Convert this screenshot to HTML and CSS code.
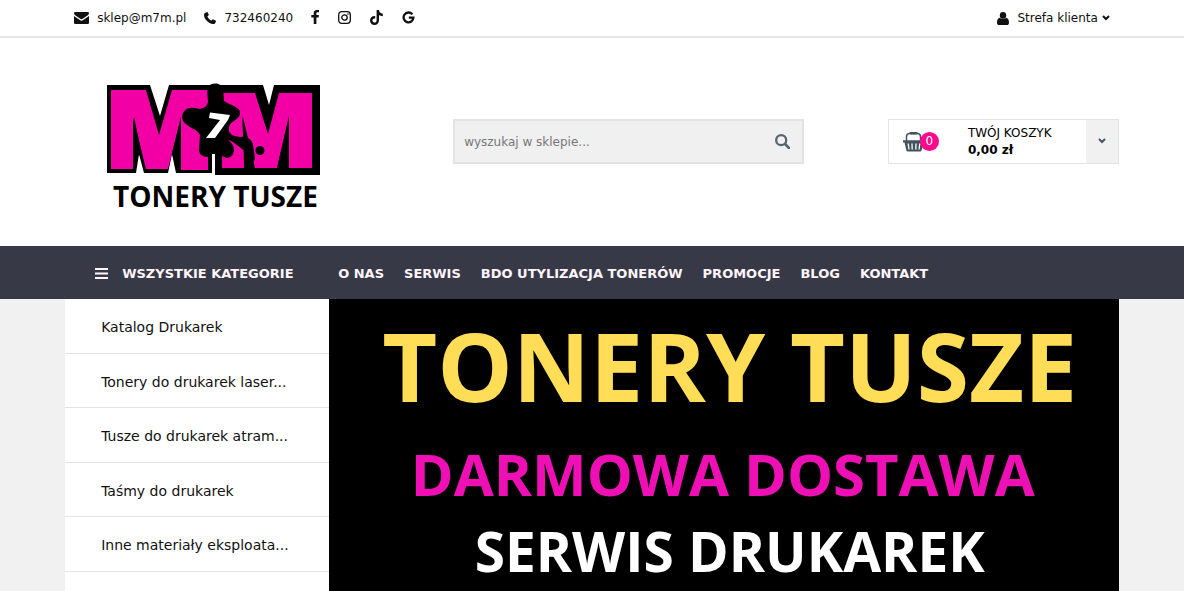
FILE: index.html
```html
<!DOCTYPE html>
<html lang="pl">
<head>
<meta charset="utf-8">
<meta name="viewport" content="width=device-width, initial-scale=1">
<title>M7M Tonery Tusze</title>
<link rel="stylesheet" href="styles.css">
</head>
<body>
<header>
  <div class="topbar">
    <div class="container topbar-row">
      <a class="contact" href="mailto:sklep@m7m.pl">
        <svg class="icon-mail" viewBox="0 0 15 12" aria-hidden="true"><path d="M1.200 0h12.600A1.200 1.200 0 0 1 15 1.300c0 .8-.5 1.500-1.200 2L8.700 6.800q-1.200.8-2.400 0L1.200 3.300C.5 2.800 0 2.100 0 1.300A1.200 1.200 0 0 1 1.200 0z"/><path d="M0 4l5.800 4.100q1.700 1.100 3.400 0L15 4v6.800A1.200 1.200 0 0 1 13.800 12H1.200A1.200 1.200 0 0 1 0 10.800z"/></svg>
        <span>sklep@m7m.pl</span>
      </a>
      <a class="contact" href="tel:732460240">
        <svg class="icon-phone" viewBox="0 0 12 12" aria-hidden="true"><path d="M2.600.2C3.200-.1 3.500 0 3.700.5l1 2c.2.500.1.800-.3 1.100l-.8.700c-.2.300-.2.500 0 .8.900 1.600 1.800 2.500 3.400 3.400.3.200.5.100.7-.1l.8-.9c.3-.3.500-.3.900-.1l2.100 1.100c.4.200.5.400.4.900-.3 1.600-1.300 2.600-2.900 2.600C4.500 12 0 6.500 0 3 0 1.600 1 .6 2.600.2z"/></svg>
        <span>732460240</span>
      </a>
      <nav class="social" aria-label="Social media">
        <a href="#facebook" aria-label="Facebook"><svg class="icon-fb" viewBox="0 0 8 14" aria-hidden="true"><path d="M8 .1v2.200H6.700C5.700 2.300 5.400 2.800 5.400 3.500V5.100h2.500l-.3 2.500H5.400V14H2.700V7.600H.3V5.100h2.400V3.200C2.700 1.100 4 0 6 0c1 0 1.700.1 2 .1z"/></svg></a>
        <a href="#instagram" aria-label="Instagram"><svg class="icon-ig" viewBox="0 0 13 13" aria-hidden="true"><rect x=".7" y=".7" width="11.600" height="11.600" rx="3" fill="none" stroke="currentColor" stroke-width="1.300"/><circle cx="6.500" cy="6.500" r="2.700" fill="none" stroke="currentColor" stroke-width="1.300"/><circle cx="10" cy="3" r=".8"/></svg></a>
        <a href="#tiktok" aria-label="TikTok"><svg class="icon-tt" viewBox="0 0 13 15" aria-hidden="true"><path d="M6.600 0H9c.1 2 1.500 3.500 3.800 3.700v2.500C11.300 6.200 10 5.700 9 5v5.200C9 13.200 7 15 4.500 15 2 15 0 13 0 10.500 0 7.700 2.300 5.800 5.200 6.100v2.600C3.700 8.300 2.500 9.200 2.500 10.500c0 1.200.9 2 2 2 1.300 0 2.100-.9 2.100-2.300z"/></svg></a>
        <a href="#google" aria-label="Google"><svg class="icon-g" viewBox="0 0 13 13" aria-hidden="true"><path d="M10.300 3.300A4.900 4.900 0 1 0 11.400 6.600H6.800" fill="none" stroke="currentColor" stroke-width="2.300"/></svg></a>
      </nav>
      <button class="client" type="button">
        <svg class="icon-user" viewBox="0 0 12 13" aria-hidden="true"><ellipse cx="6" cy="3.400" rx="3.200" ry="3.400"/><path d="M2.600 5.700Q6 8.400 9.400 5.700C11.300 6.400 12 8.200 12 10.700 12 12.200 11.100 13 9.900 13H2.100C.9 13 0 12.200 0 10.700 0 8.200.7 6.400 2.600 5.700z"/></svg>
        <span>Strefa klienta</span>
        <svg class="icon-chev" viewBox="0 0 8 6" aria-hidden="true"><path d="M1 1l3 3 3-3" fill="none" stroke="currentColor" stroke-width="2"/></svg>
      </button>
    </div>
  </div>
  <div class="container masthead">
    <a class="logo" href="#home" aria-label="M7M Tonery Tusze">
      <svg viewBox="0 0 250 150" role="img" aria-label="M7M Tonery Tusze">
        <path d="M18 15H61L71 46 80 15H174L180 35 185 15H231V105H127V95H122V103H87L83 84 79 103H55L50 84 47 103H18z"/>
        <g fill="#f200a5">
          <path d="M22 20H57L70 65 83 20H119V100H92V47L79 99H57L44 47V99H22z"/>
          <path d="M134 23H166L179 64 190 23H223V98H200V46L188 98H165L153 46 156 98H133z"/>
        </g>
        <path d="M118 18C122 12 132 12 134 19L135 31C143 36 152 37 151 44 150 50 141 51 140 57 139 64 143 66 151 67 158 66 163 69 164 75L166 89 162 95 156 81C150 77 144 71 139 70 143 73 145 76 145 80 145 85 141 88 138 88 134 87 131 84 129 81 126 83 124 83 122 85 118 89 110 86 110 80L111 65C109 59 99 58 94 51 91 43 97 36 106 38 112 40 118 38 119 32z"/>
        <path d="M122 84h5v21h-5z" fill="#fff"/>
        <path d="M119 80h4v23h-4zM126 80h6v25h-6z"/>
        <path d="M45 47L56 99 50 84 45 99zM92 47V99H88L83 84zM154 47L166 98H155zM200 47V98H188z"/>
        <circle cx="171" cy="80.500" r="4.500"/>
        <path d="M121 42.500L141 45 139 50 126 68H117L131 50 120 48z" fill="#fff"/>
        <text x="24" y="136.500" class="logo-text">TONERY TUSZE</text>
      </svg>
    </a>
    <form class="search" role="search">
      <input type="search" placeholder="wyszukaj w sklepie..." aria-label="wyszukaj w sklepie">
      <button type="button" aria-label="Szukaj"><svg viewBox="0 0 15 15" aria-hidden="true"><circle cx="6.200" cy="6.200" r="5" fill="none" stroke="currentColor" stroke-width="2.300"/><path d="M10 10l4 4" stroke="currentColor" stroke-width="2.600" stroke-linecap="round"/></svg></button>
    </form>
    <div class="cart">
      <a class="cart-main" href="#cart">
        <span class="basket">
          <svg viewBox="0 0 22 20" aria-hidden="true"><path d="M3.500 9V4.500Q3.700 1.600 6.500 1.600H14.500Q17.300 1.600 17.500 4.500V9" fill="none" stroke="currentColor" stroke-width="1.500"/><rect x="6.500" y="0" width="8" height="2.500" rx="1"/><path d="M0 8.300h22v2.200h-1.500L18.500 18.500Q18.300 19.600 17.200 19.600H4.700Q3.600 19.600 3.400 18.500L1.500 10.500H0z"/><path d="M5.200 11.500l.8 6M9 11.500l.2 6M13 11.500l-.2 6M16.800 11.500l-.8 6" stroke="#fff" stroke-width="1.300"/></svg>
          <span class="badge">0</span>
        </span>
        <span class="cart-text"><span>TWÓJ KOSZYK</span><strong>0,00 zł</strong></span>
      </a>
      <button class="cart-toggle" type="button" aria-label="Pokaż koszyk"><svg class="icon-chev" viewBox="0 0 8 6" aria-hidden="true"><path d="M1 1l3 3 3-3" fill="none" stroke="currentColor" stroke-width="2"/></svg></button>
    </div>
  </div>
  <div class="navbar">
    <nav class="container nav-row" aria-label="Menu">
      <a class="all" href="#all"><svg viewBox="0 0 13 11" aria-hidden="true"><path d="M0 1h13M0 5.500h13M0 10h13" stroke="currentColor" stroke-width="2"/></svg>WSZYSTKIE KATEGORIE</a>
      <a href="#o-nas">O NAS</a>
      <a href="#serwis">SERWIS</a>
      <a href="#bdo">BDO UTYLIZACJA TONERÓW</a>
      <a href="#promocje">PROMOCJE</a>
      <a href="#blog">BLOG</a>
      <a href="#kontakt">KONTAKT</a>
    </nav>
  </div>
</header>
<main class="container content">
  <nav class="categories" aria-label="Kategorie">
    <a href="#c1">Katalog Drukarek</a>
    <a href="#c2">Tonery do drukarek laser...</a>
    <a href="#c3">Tusze do drukarek atram...</a>
    <a href="#c4">Taśmy do drukarek</a>
    <a href="#c5">Inne materiały eksploata...</a>
  </nav>
  <section class="banner">
    <h1>TONERY TUSZE</h1>
    <p class="delivery">DARMOWA DOSTAWA</p>
    <p class="service">SERWIS DRUKAREK</p>
  </section>
</main>
</body>
</html>
```
FILE: styles.css
```css
* { box-sizing: border-box; }
body {
  margin: 0;
  min-height: 100vh;
  display: flex;
  flex-direction: column;
  background: #f1f1f1;
  color: #111;
  font: 12px/16px "DejaVu Sans", sans-serif;
}
a { color: inherit; text-decoration: none; }
button { border: 0; padding: 0; background: none; color: inherit; font: inherit; cursor: pointer; }
svg { display: block; fill: currentColor; flex: none; }
header { background: #fff; }
.container { width: 89%; margin: 0 auto; }

.topbar { border-bottom: 2px solid #e5e5e5; }
.topbar-row { display: flex; align-items: center; height: 36px; padding: 0 9px; }
.contact { display: flex; align-items: center; gap: 8px; margin-right: 18px; }
.icon-mail { width: 15px; height: 12px; }
.icon-phone { width: 12px; height: 12px; }
.social { display: flex; align-items: center; gap: 19px; padding-bottom: 2px; }
.icon-fb { width: 8px; height: 14px; }
.icon-ig { width: 13px; height: 13px; }
.icon-tt { width: 13px; height: 15px; }
.icon-g { width: 13px; height: 13px; }
.client { display: flex; align-items: center; gap: 8px; margin-left: auto; }
.icon-user { width: 12px; height: 13px; }
.icon-chev { width: 8px; height: 6px; }
.client .icon-chev { margin-left: -4px; }

.masthead { display: grid; grid-template-columns: 388px 351px 1fr; align-items: center; height: 208px; padding-bottom: 2px; }
.logo { padding: 8px 0 0 24px; color: #000; }
.logo svg { width: 250px; height: 150px; }
.logo-text { font: 700 28px "Open Sans", sans-serif; fill: #000; }
.search { display: flex; height: 45px; border: 2px solid #e3e3e3; background: #f0f0f0; }
.search input { flex: 1; min-width: 0; border: 0; padding: 2px 9px 0; background: none; font: inherit; color: #333; appearance: none; }
.search input::placeholder { color: #777; opacity: 1; }
.search button { width: 40px; display: grid; place-items: center; color: #566570; }
.search button svg { width: 15px; height: 15px; }
.cart { justify-self: end; width: 231px; height: 45px; display: flex; border: 1px solid #e3e3e3; }
.cart-main { flex: 1; display: flex; align-items: center; padding: 2px 0 0 14px; }
.basket { position: relative; width: 65px; color: #44545f; }
.basket svg { width: 22px; height: 20px; }
.badge { position: absolute; left: 17px; top: 0; width: 19px; height: 19px; border-radius: 50%; background: #ff0a8c; color: #fff; font-size: 12px; line-height: 19px; text-align: center; }
.cart-text { display: flex; flex-direction: column; line-height: 17px; color: #000; }
.cart-toggle { width: 32px; display: grid; place-items: center; background: #f1f1f1; color: #44545f; }

.navbar { background: #383946; color: #fff5fa; }
.nav-row { display: flex; align-items: center; gap: 20px; height: 53px; padding: 2px 0 0 30px; font-size: 13px; font-weight: 700; white-space: nowrap; }
.all { display: flex; align-items: center; gap: 14px; width: 223px; }
.all svg { width: 13px; height: 11px; }

.content { flex: 1; display: grid; grid-template-columns: 1fr 3fr; }
.categories { background: #fff; font-size: 14px; }
.categories a { display: flex; align-items: center; height: 55px; padding: 2px 0 0 36px; border-bottom: 1px solid #e3e3e3; white-space: nowrap; }
.categories a:nth-child(even) { height: 54px; }
.banner { padding-left: 12px; background: #000; color: #fff; font-family: "Open Sans", sans-serif; text-align: center; white-space: nowrap; overflow: hidden; }
.banner h1, .banner p { margin: 0; font-weight: 700; }
.banner h1 { padding-top: 14px; font-size: 95px; line-height: 104px; color: #ffdd57; }
.banner .delivery { padding: 24px 14px 0 0; font-size: 58px; line-height: 66px; color: #ef10b5; }
.banner .service { padding-top: 12px; font-size: 55px; line-height: 64px; }
```
